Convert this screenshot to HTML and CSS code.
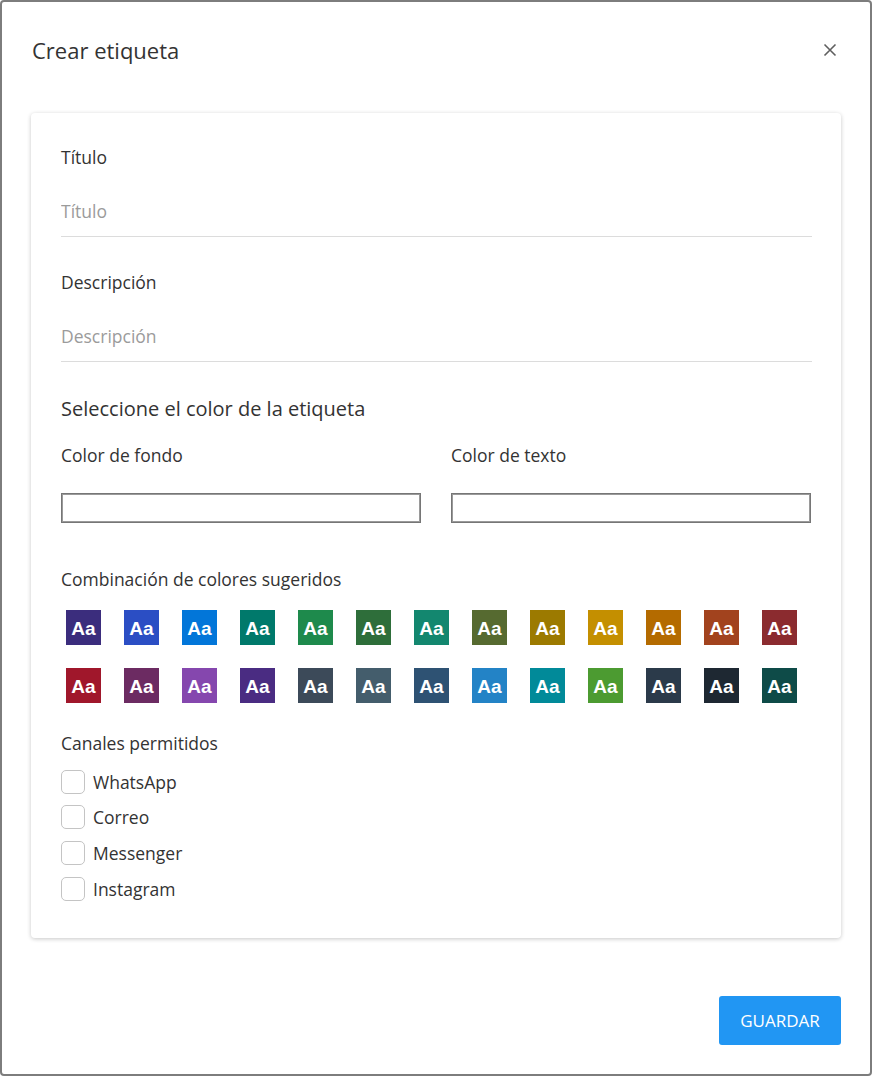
FILE: index.html
```html
<!DOCTYPE html>
<html lang="es">
<head>
<meta charset="utf-8">
<title>Crear etiqueta</title>
<link rel="stylesheet" href="styles.css">
</head>
<body>
<div class="modal">
  <header class="modal-header">
    <h1 class="modal-title">Crear etiqueta</h1>
    <button class="close" aria-label="Cerrar">
      <svg width="14" height="14" viewBox="0 0 14 14"><path d="M1.5 1.5 L12.5 12.5 M12.5 1.5 L1.5 12.5" stroke="#5f5f5f" stroke-width="1.6" fill="none"/></svg>
    </button>
  </header>
  <section class="card">
    <label class="field-label">Título</label>
    <input class="line-input" type="text" placeholder="Título">
    <label class="field-label second">Descripción</label>
    <input class="line-input" type="text" placeholder="Descripción">

    <h2 class="section-title">Seleccione el color de la etiqueta</h2>
    <div class="color-fields">
      <div class="color-field">
        <label class="field-label">Color de fondo</label>
        <input class="box-input" type="text">
      </div>
      <div class="color-field">
        <label class="field-label">Color de texto</label>
        <input class="box-input" type="text">
      </div>
    </div>

    <div class="field-label suggest-title">Combinación de colores sugeridos</div>
    <div class="swatches">
      <span class="sw c1">Aa</span><span class="sw c2">Aa</span><span class="sw c3">Aa</span><span class="sw c4">Aa</span><span class="sw c5">Aa</span><span class="sw c6">Aa</span><span class="sw c7">Aa</span><span class="sw c8">Aa</span><span class="sw c9">Aa</span><span class="sw c10">Aa</span><span class="sw c11">Aa</span><span class="sw c12">Aa</span><span class="sw c13">Aa</span>
      <span class="sw c14">Aa</span><span class="sw c15">Aa</span><span class="sw c16">Aa</span><span class="sw c17">Aa</span><span class="sw c18">Aa</span><span class="sw c19">Aa</span><span class="sw c20">Aa</span><span class="sw c21">Aa</span><span class="sw c22">Aa</span><span class="sw c23">Aa</span><span class="sw c24">Aa</span><span class="sw c25">Aa</span><span class="sw c26">Aa</span>
    </div>

    <div class="field-label channels-title">Canales permitidos</div>
    <ul class="channels">
      <li><span class="check"></span>WhatsApp</li>
      <li><span class="check"></span>Correo</li>
      <li><span class="check"></span>Messenger</li>
      <li><span class="check"></span>Instagram</li>
    </ul>
  </section>
  <footer class="modal-footer">
    <button class="save">GUARDAR</button>
  </footer>
</div>
</body>
</html>
```

FILE: styles.css
```css
html, body {
  margin: 0;
  padding: 0;
  background: #fff;
}
body {
  font-family: "Open Sans", "Noto Sans", sans-serif;
  color: #333;
}
.modal {
  box-sizing: border-box;
  width: 872px;
  height: 1076px;
  border: 2px solid #7d7d7d;
  border-radius: 4px;
  background: #fff;
  display: flex;
  flex-direction: column;
}
.modal-header {
  display: flex;
  align-items: center;
  justify-content: space-between;
  padding: 31px 30px 0 30px;
  height: 34px;
}
.modal-title {
  margin: 0;
  font-size: 22px;
  font-weight: 400;
  color: #333;
  line-height: 30px;
}
.close {
  border: 0;
  background: none;
  padding: 0;
  width: 20px;
  height: 20px;
  display: flex;
  align-items: center;
  justify-content: center;
  margin-top: -1px;
}
.card {
  margin: 46px 29px 0 29px;
  height: 825px;
  box-sizing: border-box;
  padding: 32px 29px 0 30px;
  border-radius: 4px;
  box-shadow: 0 1px 4px rgba(0,0,0,0.22);
  display: flex;
  flex-direction: column;
}
.field-label {
  display: block;
  font-size: 17.5px;
  line-height: 24px;
  color: #333;
}
.field-label.second {
  margin-top: 33px;
}
.line-input {
  margin-top: 17px;
  height: 51px;
  box-sizing: border-box;
  border: 0;
  border-bottom: 1px solid #dcdcdc;
  padding: 0;
  font-family: inherit;
  font-size: 17.5px;
  outline: none;
}
.line-input::placeholder {
  color: #9b9b9b;
}
.section-title {
  margin: 33px 0 0;
  font-size: 20px;
  font-weight: 400;
  line-height: 28px;
  color: #333;
}
.color-fields {
  margin-top: 20px;
  display: grid;
  grid-template-columns: 360px 360px;
  column-gap: 30px;
}
.box-input {
  margin-top: 26px;
  box-sizing: border-box;
  width: 360px;
  height: 30px;
  border: 1px solid #767676;
  box-shadow: inset 0 0 0 1px #9a9a9a;
  padding: 0;
  outline: none;
}
.suggest-title {
  margin-top: 44px;
}
.swatches {
  margin-top: 19px;
  padding-left: 5px;
  display: grid;
  grid-template-columns: repeat(13, 35px);
  column-gap: 23px;
  row-gap: 23px;
}
.sw {
  width: 35px;
  height: 35px;
  display: flex;
  align-items: center;
  justify-content: center;
  padding-top: 2px;
  box-sizing: border-box;
  color: #fff;
  font-family: "Liberation Sans", Arial, sans-serif;
  font-weight: 700;
  font-size: 19px;
}
.c1 { background: #3b2d7d; }
.c2 { background: #2b4ec4; }
.c3 { background: #0276d9; }
.c4 { background: #00796b; }
.c5 { background: #1e8a4c; }
.c6 { background: #2e6e3a; }
.c7 { background: #13876f; }
.c8 { background: #566a30; }
.c9 { background: #9c7a00; }
.c10 { background: #c48f00; }
.c11 { background: #b46b00; }
.c12 { background: #a2431e; }
.c13 { background: #8b2b2f; }
.c14 { background: #a0172b; }
.c15 { background: #6c2b62; }
.c16 { background: #8547ae; }
.c17 { background: #4a2c82; }
.c18 { background: #3c4a59; }
.c19 { background: #445d6c; }
.c20 { background: #2e5273; }
.c21 { background: #2383c6; }
.c22 { background: #018a99; }
.c23 { background: #4c9b31; }
.c24 { background: #2b3a4a; }
.c25 { background: #1e2832; }
.c26 { background: #0e4b48; }
.channels-title {
  margin-top: 28px;
}
.channels {
  list-style: none;
  margin: 9px 0 0;
  padding: 0;
}
.channels li {
  display: flex;
  align-items: center;
  height: 35.6px;
  font-size: 17.5px;
  color: #333;
}
.check {
  box-sizing: border-box;
  width: 24px;
  height: 24px;
  border: 1px solid #c4c4c4;
  border-radius: 5px;
  margin-right: 8px;
}
.modal-footer {
  display: flex;
  justify-content: flex-end;
  padding: 58px 29px 0;
}
.save {
  width: 122px;
  height: 49px;
  border: 0;
  border-radius: 3px;
  background: #2196f3;
  color: #fff;
  font-family: inherit;
  font-size: 17px;
}
```
